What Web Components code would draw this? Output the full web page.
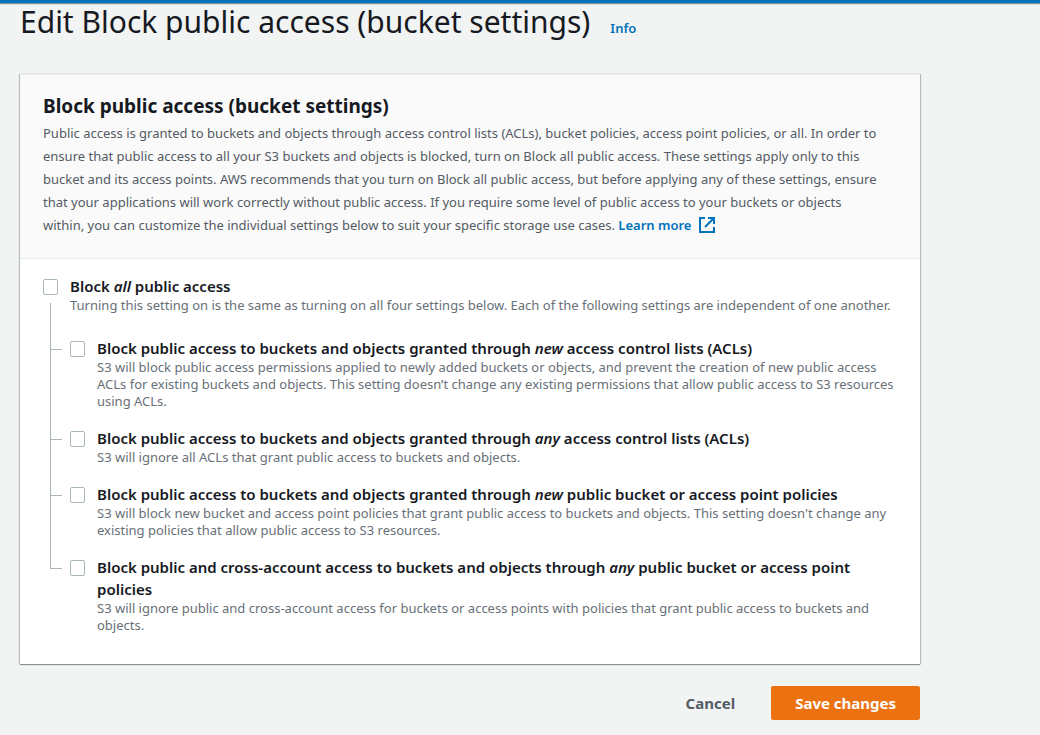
<!DOCTYPE html>
<html lang="en">
<head>
<meta charset="utf-8">
<meta name="viewport" content="width=device-width, initial-scale=1">
<title>Edit Block public access (bucket settings)</title>
<style>
  html { background: #f2f3f3; }
  body { margin: 0; font-family: "Noto Sans", "Open Sans", sans-serif; color: #16191f; }
</style>
</head>
<body>
<access-page></access-page>

<template id="page-tpl">
  <style>
    :host {
      display: block;
      --link: #0073bb;
      --line: #aab7b8;
      --body-text: #545b64;
      --hint-text: #687078;
    }
    .bar { height: 3px; background: var(--link); border-bottom: 1px solid #879596; box-shadow: 0 1px 0 #d5dbdb; }
    main { padding: 0 120px 15px 20px; }
    .title { display: flex; align-items: baseline; gap: 20px; height: 70px; }
    h1 { margin: 0; font-size: 30px; font-weight: 400; line-height: 36px; }
    .info { font-size: 13px; font-weight: 600; color: var(--link); text-decoration: none; }
    .actions { display: flex; justify-content: flex-end; gap: 12px; margin-top: 22px; }
  </style>
  <div class="bar"></div>
  <main>
    <div class="title">
      <h1>Edit Block public access (bucket settings)</h1>
      <a class="info" href="#info">Info</a>
    </div>
    <settings-card>
      <span slot="heading">Block public access (bucket settings)</span>
      <span slot="description">Public access is granted to buckets and objects through access control lists (ACLs), bucket policies, access point policies, or all. In order to ensure that public access to all your S3 buckets and objects is blocked, turn on Block all public access. These settings apply only to this bucket and its access points. AWS recommends that you turn on Block all public access, but before applying any of these settings, ensure that your applications will work correctly without public access. If you require some level of public access to your buckets or objects within, you can customize the individual settings below to suit your specific storage use cases. <external-link href="#learn-more">Learn more</external-link></span>
      <setting-option root>
        <span slot="label">Block <em>all</em> public access</span>
        <span slot="hint">Turning this setting on is the same as turning on all four settings below. Each of the following settings are independent of one another.</span>
      </setting-option>
      <setting-option>
        <span slot="label">Block public access to buckets and objects granted through <em>new</em> access control lists (ACLs)</span>
        <span slot="hint">S3 will block public access permissions applied to newly added buckets or objects, and prevent the creation of new public access ACLs for existing buckets and objects. This setting doesn’t change any existing permissions that allow public access to S3 resources using ACLs.</span>
      </setting-option>
      <setting-option>
        <span slot="label">Block public access to buckets and objects granted through <em>any</em> access control lists (ACLs)</span>
        <span slot="hint">S3 will ignore all ACLs that grant public access to buckets and objects.</span>
      </setting-option>
      <setting-option>
        <span slot="label">Block public access to buckets and objects granted through <em>new</em> public bucket or access point policies</span>
        <span slot="hint">S3 will block new bucket and access point policies that grant public access to buckets and objects. This setting doesn't change any existing policies that allow public access to S3 resources.</span>
      </setting-option>
      <setting-option last>
        <span slot="label">Block public and cross-account access to buckets and objects through <em>any</em> public bucket or access point policies</span>
        <span slot="hint">S3 will ignore public and cross-account access for buckets or access points with policies that grant public access to buckets and objects.</span>
      </setting-option>
    </settings-card>
    <div class="actions">
      <action-button>Cancel</action-button>
      <action-button primary>Save changes</action-button>
    </div>
  </main>
</template>

<template id="card-tpl">
  <style>
    :host {
      display: block;
      background: #fff;
      border-top: 1px solid #eaeded;
      box-shadow: 0 1px 1px 0 rgba(0, 28, 36, .4), 1px 0 1px 0 rgba(0, 28, 36, .2), -1px 0 1px 0 rgba(0, 28, 36, .2);
    }
    header { padding: 17px 38px 21px 23px; background: #fafafa; border-bottom: 1px solid #eaeded; }
    h2 { margin: 0 0 2px; font-size: 19px; font-weight: 700; line-height: 28px; }
    p { margin: 0; font-size: 13px; line-height: 23px; color: var(--body-text); }
    .body { padding: 16px 23px 30px; }
  </style>
  <header>
    <h2><slot name="heading"></slot></h2>
    <p><slot name="description"></slot></p>
  </header>
  <div class="body"><slot></slot></div>
</template>

<template id="option-tpl">
  <style>
    :host { display: flex; }
    .tree { display: flex; flex-direction: column; width: 12px; margin: 0 8px 0 7px; }
    .tick { height: 12px; border-left: 1px solid var(--line); border-bottom: 1px solid var(--line); }
    .rail { flex: 1; border-left: 1px solid var(--line); }
    .control { display: flex; flex-direction: column; width: 15px; margin-right: 12px; padding-top: 4px; }
    input {
      appearance: none; box-sizing: border-box; width: 15px; height: 16px; margin: 0;
      background: #fff; border: 1px solid var(--line); border-radius: 2px;
    }
    input:checked { background: var(--link); border-color: var(--link); }
    .trunk { display: none; }
    .text { flex: 1; min-width: 0; padding-bottom: 17px; }
    label { display: block; font-size: 15px; font-weight: 650; line-height: 22px; }
    .hint { font-size: 13px; line-height: 17px; color: var(--hint-text); }
    :host([root]) .tree { display: none; }
    :host([root]) .trunk { display: block; flex: 1; margin: 8px 0 0 7px; border-left: 1px solid var(--line); }
    :host([root]) .text { padding-bottom: 23px; }
    :host([last]) .rail { border-color: transparent; }
    :host([last]) .text { padding-bottom: 0; }
  </style>
  <div class="tree"><div class="tick"></div><div class="rail"></div></div>
  <div class="control"><input type="checkbox" id="box" aria-describedby="hint"><div class="trunk"></div></div>
  <div class="text">
    <label for="box"><slot name="label"></slot></label>
    <div class="hint" id="hint"><slot name="hint"></slot></div>
  </div>
</template>

<template id="link-tpl">
  <style>
    :host { display: inline; white-space: nowrap; }
    a { font-weight: 600; color: var(--link); text-decoration: none; }
    svg { width: 16px; height: 16px; margin-left: 4px; vertical-align: -3px; }
  </style>
  <a><slot></slot> <svg viewBox="0 0 16 16" fill="none" stroke="currentColor" stroke-width="2" aria-hidden="true"><path d="M6 1H1v14h14v-5M9 1h6v6M15 1L6 10"/></svg></a>
</template>

<template id="button-tpl">
  <style>
    :host { display: block; }
    button {
      height: 34px; padding: 0 24px; border: 0; border-radius: 2px; background: transparent;
      font: 700 15px/22px "Noto Sans", "Open Sans", sans-serif; color: #545b64; cursor: pointer;
    }
    :host([primary]) button { background: #ec7211; color: #fff; }
  </style>
  <button type="button"><slot></slot></button>
</template>

<script>
  class TemplateElement extends HTMLElement {
    constructor() {
      super();
      const tpl = document.getElementById(this.constructor.template);
      this.attachShadow({ mode: 'open' }).append(tpl.content.cloneNode(true));
    }
  }
  class ActionButton extends TemplateElement { static template = 'button-tpl'; }
  class ExternalLink extends TemplateElement {
    static template = 'link-tpl';
    connectedCallback() {
      this.shadowRoot.querySelector('a').href = this.getAttribute('href') || '#';
    }
  }
  class SettingOption extends TemplateElement { static template = 'option-tpl'; }
  class SettingsCard extends TemplateElement { static template = 'card-tpl'; }
  class AccessPage extends TemplateElement { static template = 'page-tpl'; }

  customElements.define('action-button', ActionButton);
  customElements.define('external-link', ExternalLink);
  customElements.define('setting-option', SettingOption);
  customElements.define('settings-card', SettingsCard);
  customElements.define('access-page', AccessPage);
</script>
</body>
</html>
